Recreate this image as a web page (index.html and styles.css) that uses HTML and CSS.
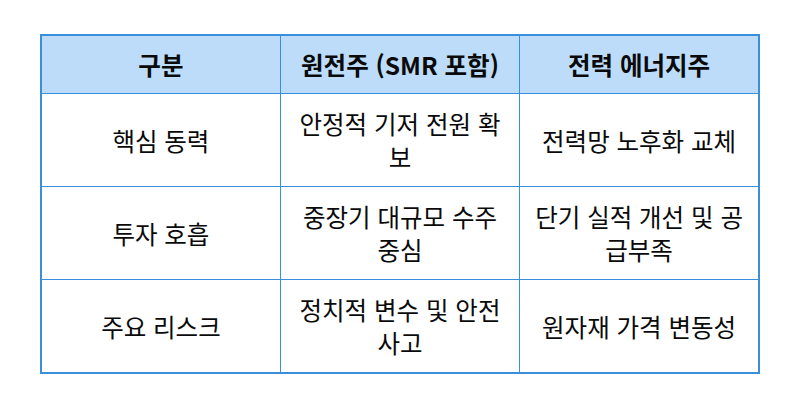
FILE: index.html
```html
<!DOCTYPE html>
<html lang="ko">
<head>
<meta charset="utf-8">
<link rel="stylesheet" href="styles.css">
</head>
<body>
<div class="page">
<table class="cmp">
<thead>
<tr><th>구분</th><th>원전주 (SMR 포함)</th><th>전력 에너지주</th></tr>
</thead>
<tbody>
<tr><td>핵심 동력</td><td>안정적 기저 전원 확보</td><td>전력망 노후화 교체</td></tr>
<tr><td>투자 호흡</td><td>중장기 대규모 수주 중심</td><td>단기 실적 개선 및 공급부족</td></tr>
<tr><td>주요 리스크</td><td>정치적 변수 및 안전 사고</td><td>원자재 가격 변동성</td></tr>
</tbody>
</table>
</div>
</body>
</html>
```
FILE: styles.css
```css
html, body {
  margin: 0;
  padding: 0;
  background: #ffffff;
}
.page {
  padding: 34px 40px 0 40px;
  font-family: "Noto Sans CJK KR", "Noto Sans", sans-serif;
  color: #0a0a0a;
}
.cmp {
  width: 720px;
  border-collapse: collapse;
  border: 2px solid #3a8fdc;
  table-layout: fixed;
}
.cmp th, .cmp td {
  border: 1px solid #3a8fdc;
  text-align: center;
  vertical-align: middle;
  padding: 0 10px;
  font-size: 24.5px;
  line-height: 33px;
}
.cmp th {
  background: #bcdcfa;
  font-weight: 700;
  height: 57px;
}
.cmp td {
  font-weight: 400;
  height: 92px;
}
```
